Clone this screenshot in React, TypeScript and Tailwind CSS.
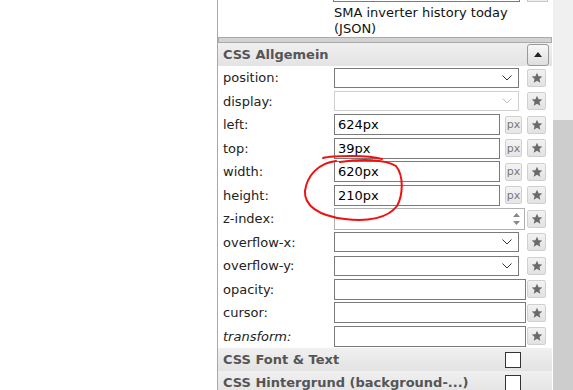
import React from "react";

const font = { fontFamily: '"DejaVu Sans", Verdana, sans-serif' };

function Star() {
  return (
    <div className="w-[19px] h-[18px] shrink-0 border border-[#d0d0d0] rounded-[2px] bg-gradient-to-b from-[#f2f2f2] to-[#e2e2e2] flex items-center justify-center">
      <svg width="12" height="12" viewBox="0 0 24 24">
        <path d="M12 1.5l3.1 7 7.4.6-5.6 4.9 1.7 7.4L12 17.5l-6.6 3.9 1.7-7.4L1.5 9.1l7.4-.6z" fill="#6a6a6a" />
      </svg>
    </div>
  );
}

function Chevron({ color }: { color: string }) {
  return (
    <svg width="10" height="6" viewBox="0 0 10 6" className="absolute right-[6px] top-1/2 -translate-y-1/2">
      <polyline points="0.5,0.5 5,5 9.5,0.5" fill="none" stroke={color} strokeWidth="1" />
    </svg>
  );
}

function Row({ label, italic, children }: { label: string; italic?: boolean; children: React.ReactNode }) {
  return (
    <div className="flex items-center h-[23.5px]">
      <div className={"w-[116px] shrink-0 pl-[5px] text-[13px] text-[#222] " + (italic ? "italic" : "")}>{label}</div>
      {children}
    </div>
  );
}

function SelectBox({ disabled }: { disabled?: boolean }) {
  return (
    <>
      <div className={"relative shrink-0 w-[185px] h-[20px] bg-white border " + (disabled ? "border-[#d0d0d0]" : "border-[#7a7a7a]")}>
        <Chevron color={disabled ? "#c0c0c0" : "#333"} />
      </div>
      <div className="ml-[8px]">
        <Star />
      </div>
    </>
  );
}

function PxInput({ value }: { value: string }) {
  return (
    <>
      <div className="shrink-0 w-[166px] h-[21px] bg-white border border-[#7a7a7a] pl-[3px] text-[13px] leading-[19px] text-black">{value}</div>
      <div className="shrink-0 ml-[5px] w-[17px] h-[18px] border border-[#d0d0d0] rounded-[2px] bg-gradient-to-b from-[#f4f4f4] to-[#e6e6e6] flex items-center justify-center text-[11px] leading-none text-[#777]">px</div>
      <div className="ml-[5px]">
        <Star />
      </div>
    </>
  );
}

function PlainInput() {
  return (
    <>
      <div className="shrink-0 w-[192px] h-[21px] bg-white border border-[#7a7a7a]" />
      <div className="ml-[1px]">
        <Star />
      </div>
    </>
  );
}

function NumberInput() {
  return (
    <>
      <div className="relative shrink-0 w-[191px] h-[22px] bg-white border border-[#b0b0b0]">
        <div className="absolute right-0 top-0 bottom-0 w-[16px] flex flex-col items-center justify-center gap-[4px]">
          <svg width="7" height="4" viewBox="0 0 7 4"><polygon points="0,4 3.5,0 7,4" fill="#888" /></svg>
          <svg width="7" height="4" viewBox="0 0 7 4"><polygon points="0,0 3.5,4 7,0" fill="#888" /></svg>
        </div>
      </div>
      <div className="ml-[2px]">
        <Star />
      </div>
    </>
  );
}

function Header({ title, children }: { title: string; children?: React.ReactNode }) {
  return (
    <div className="flex items-center h-[23px] bg-gradient-to-b from-[#f0f0f0] to-[#e3e3e3] pl-[5px] pr-[3px]">
      <div className="flex-1 font-bold text-[13px] text-[#555] whitespace-nowrap">{title}</div>
      {children}
    </div>
  );
}

export default function App() {
  return (
    <div className="relative w-[573px] h-[390px] overflow-hidden bg-white flex" style={font}>
      <div className="w-[217px] shrink-0 bg-white" />
      <div className="w-px shrink-0 bg-[#a8a8a8]" />
      <div className="w-[334px] shrink-0">
        <div className="flex h-[2px]">
          <div className="ml-[115px] w-[187px] h-[2px] border-x border-b border-[#7a7a7a]" />
          <div className="ml-[7px] w-[21px] h-[2px] border-x border-b border-[#c8c8c8] bg-[#eee]" />
        </div>
        <div className="pt-[3px] ml-[116px] w-[190px] h-[35px] text-[13px] leading-[16px] text-[#111]">
          SMA inverter history today (JSON)
        </div>
        <div className="h-[6px] border border-[#aaaaaa] bg-[#d2d2d2]" />
        <div className="flex items-center h-[23px] bg-gradient-to-b from-[#f0f0f0] to-[#e3e3e3] pl-[5px] pr-[3px]">
          <div className="flex-1 font-bold text-[13px] text-[#555]">CSS Allgemein</div>
          <div className="w-[22px] h-[22px] border border-[#9a9a9a] rounded-[3px] bg-gradient-to-b from-[#f8f8f8] to-[#dedede] flex items-center justify-center">
            <svg width="8" height="5" viewBox="0 0 8 5"><polygon points="0,5 4,0 8,5" fill="#222" /></svg>
          </div>
        </div>
        <Row label="position:"><SelectBox /></Row>
        <Row label="display:"><SelectBox disabled /></Row>
        <Row label="left:"><PxInput value="624px" /></Row>
        <Row label="top:"><PxInput value="39px" /></Row>
        <Row label="width:"><PxInput value="620px" /></Row>
        <Row label="height:"><PxInput value="210px" /></Row>
        <Row label="z-index:"><NumberInput /></Row>
        <Row label="overflow-x:"><SelectBox /></Row>
        <Row label="overflow-y:"><SelectBox /></Row>
        <Row label="opacity:"><PlainInput /></Row>
        <Row label="cursor:"><PlainInput /></Row>
        <Row label="transform:" italic><PlainInput /></Row>
        <Header title="CSS Font & Text">
          <div className="mr-[28px] w-[16px] h-[16px] bg-white border border-[#333]" />
        </Header>
        <Header title="CSS Hintergrund (background-...)">
          <div className="mr-[28px] w-[16px] h-[16px] bg-white border border-[#333]" />
        </Header>
      </div>
      <div className="w-px shrink-0 bg-white" />
      <div className="w-[20px] shrink-0 flex flex-col">
        <div className="h-[120px] shrink-0 bg-[#f0f0f0]" />
        <div className="flex-1 bg-[#cdcdcd]" />
      </div>
      <svg className="absolute inset-0 pointer-events-none" width="573" height="390" viewBox="0 0 573 390">
        <path d="M323 158 C330 156, 340 156, 352 156 C365 156, 375 157, 382 159" fill="none" stroke="#ee1111" strokeWidth="2" strokeLinecap="round" />
        <path d="M336 161 C318 163, 307 176, 305 191 C304 205, 318 216, 345 219 C368 222, 388 218, 397 206 C403 195, 404 176, 396 166 C385 159, 360 159, 340 162" fill="none" stroke="#ee1111" strokeWidth="2" strokeLinecap="round" />
      </svg>
    </div>
  );
}
